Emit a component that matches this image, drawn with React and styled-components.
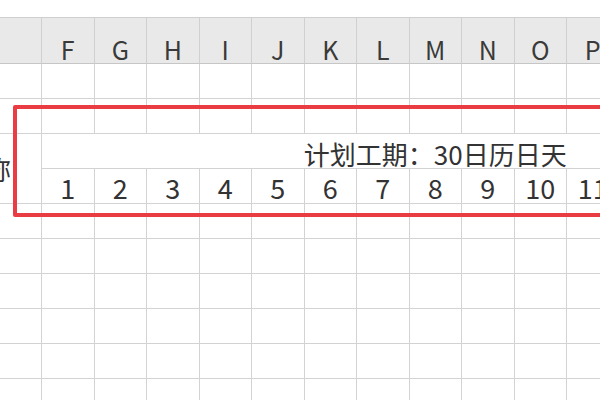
import React from 'react';
import styled, { createGlobalStyle } from 'styled-components';

const GlobalStyle = createGlobalStyle`
  html, body {
    margin: 0;
    padding: 0;
    background: #fff;
    overflow: hidden;
  }
  body {
    font-family: "Noto Sans CJK SC", "Liberation Sans", sans-serif;
    color: #333;
  }
`;

// columns F..T; only F..P are in view, the rest stay blank
const letters = ['F', 'G', 'H', 'I', 'J', 'K', 'L', 'M', 'N', 'O', 'P', '', '', '', ''];
const emptyRows = 7;

const Page = styled.div`
  width: 600px;
  height: 400px;
  padding-top: 17px;
  box-sizing: border-box;
  overflow: hidden;
  position: relative;
`;

const Sheet = styled.div`
  display: grid;
  grid-template-columns: 42px repeat(15, 52.5px);
  grid-template-rows: 47px repeat(${emptyRows + 4}, 35px);
  width: max-content;
`;

const HeadCell = styled.div`
  background: #e9e9e9;
  border-top: 1px solid #cfcfcf;
  border-bottom: 1px solid #c6c6c6;
  border-right: 1px solid #d0d0d0;
  box-sizing: border-box;
  display: flex;
  align-items: center;
  justify-content: center;
  padding-top: 17px;
  font-size: 25px;
  line-height: 1;
  color: #3a3a3a;
`;

const Cell = styled.div`
  border-right: 1px solid #d3d3d3;
  border-bottom: 1px solid #d3d3d3;
  box-sizing: border-box;
  display: flex;
  align-items: center;
  justify-content: ${(p) => p.$align || 'center'};
  grid-column: span ${(p) => p.$cols || 1};
  grid-row: span ${(p) => p.$rows || 1};
  overflow: hidden;
  white-space: nowrap;
  font-size: ${(p) => p.$size || 26}px;
  line-height: 1;
  padding: ${(p) => p.$pad || '0'};
`;

const Highlight = styled.div`
  position: absolute;
  top: 105px;
  left: 13px;
  width: 640px;
  height: 112px;
  border: 4px solid #ea3c43;
  border-radius: 2px;
  box-sizing: border-box;
  pointer-events: none;
`;

const blankRow = (key) => [
  <Cell key={`${key}-e`} />,
  ...letters.map((_, i) => <Cell key={`${key}-${i}`} />),
];

export default function App() {
  return (
    <>
      <GlobalStyle />
      <Page>
        <Sheet>
          <HeadCell />
          {letters.map((l, i) => (
            <HeadCell key={i}>{l}</HeadCell>
          ))}

          {blankRow('r1')}
          {blankRow('r2')}

          <Cell $rows={2} $align="flex-end" $pad="0 30px 0 0">
            名称
          </Cell>
          <Cell $cols={15} $pad="5px 0 0 0">
            计划工期：30日历日天
          </Cell>
          {letters.map((l, i) => (
            <Cell key={`n-${i}`} $size={27} $pad="3px 0 0 0">
              {l ? i + 1 : ''}
            </Cell>
          ))}

          {Array.from({ length: emptyRows }, (_, i) => blankRow(`b${i}`))}
        </Sheet>
        <Highlight />
      </Page>
    </>
  );
}
